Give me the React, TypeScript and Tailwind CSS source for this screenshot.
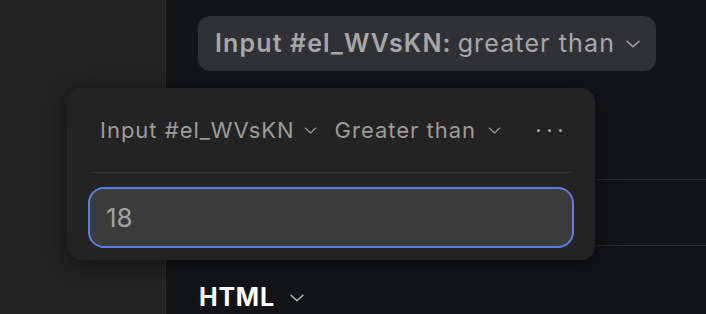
import React from "react";

const FONT = { fontFamily: "Inter, 'Noto Sans', sans-serif" };

function Chevron({ className = "" }: { className?: string }) {
  return (
    <svg viewBox="0 0 14 8" className={className} fill="none" stroke="currentColor" strokeWidth={1.4} strokeLinecap="round" strokeLinejoin="round">
      <path d="M1 1.2 7 6.8 13 1.2" />
    </svg>
  );
}

export default function App() {
  return (
    <div className="relative flex h-[314px] w-[706px] overflow-hidden bg-[#131417]" style={FONT}>
      {/* sidebar */}
      <div className="h-full w-[166px] shrink-0 border-r border-[#2c2c2e] bg-[#232323]" />

      {/* main */}
      <div className="flex flex-1 flex-col">
        <div className="ml-[32px] mt-[16px] flex h-[55px] w-[458px] shrink-0 items-center rounded-[12px] bg-[#303135] pl-[17px] text-[25px] tracking-[0.045em] text-[#a7a7aa]">
          <span className="font-semibold">Input #el_WVsKN:</span>
          <span className="ml-[6px]">greater than</span>
          <Chevron className="ml-[11px] h-[8px] w-[14px]" />
        </div>

        <div className="mt-[108px] h-[67px] shrink-0 border-y border-[#2a2b2e]" />

        <div className="ml-[33px] mt-[33px] flex items-center text-[25px] font-bold tracking-[0.03em] text-white">
          <span>HTML</span>
          <Chevron className="ml-[15px] h-[8px] w-[14px] text-[#bdbdbd]" />
        </div>
      </div>

      {/* popover */}
      <div className="absolute left-[67px] top-[88px] h-[172px] w-[528px] rounded-[14px] bg-[#232323] px-[21px] shadow-[0_4px_24px_rgba(0,0,0,0.45)]">
        <div className="flex h-[84px] items-center pl-[12px] text-[22px] tracking-[0.045em] text-[#9c9c9c]">
          <span>Input #el_WVsKN</span>
          <Chevron className="ml-[9px] h-[7px] w-[13px]" />
          <span className="ml-[18px]">Greater than</span>
          <Chevron className="ml-[12px] h-[7px] w-[13px]" />
          <div className="ml-[36px] flex items-center gap-[8px]">
            <span className="h-[3px] w-[3px] rounded-full bg-[#a8a8a8]" />
            <span className="h-[3px] w-[3px] rounded-full bg-[#a8a8a8]" />
            <span className="h-[3px] w-[3px] rounded-full bg-[#a8a8a8]" />
          </div>
        </div>
        <div className="mx-[3px] h-px bg-[#363636]" />
        <div className="mt-[14px] flex h-[61px] items-center rounded-[16px] border-[2.5px] border-[#5b7fea] bg-[#3b3b3b] pl-[16px] text-[26px] text-[#a3a3a3]">
          18
        </div>
      </div>
    </div>
  );
}
